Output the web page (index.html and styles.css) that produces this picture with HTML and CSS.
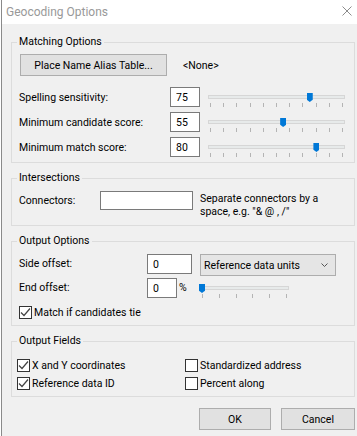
FILE: index.html
```html
<!DOCTYPE html>
<html lang="en">

<head>
    <meta charset="UTF-8">
    <title>Geocoding Options</title>
    <link rel="stylesheet" href="styles.css">
</head>

<body>
    <div class="window">
        <div class="titlebar">
            <span class="title">Geocoding Options</span>
            <svg class="close" width="10" height="10" viewBox="0 0 10 10">
                <path d="M0.5 0.5L9.5 9.5M9.5 0.5L0.5 9.5" stroke="#8c8c8c" stroke-width="1" fill="none"/>
            </svg>
        </div>
        <div class="content">
            <fieldset class="group group-matching">
                <legend>Matching Options</legend>
                <div class="alias-row">
                    <button class="btn btn-alias">Place Name Alias Table...</button>
                    <span class="alias-value">&lt;None&gt;</span>
                </div>
                <div class="score-grid">
                    <label>Spelling sensitivity:</label>
                    <input class="field field-score" type="text" value="75">
                    <div class="slider slider-wide">
                        <div class="slider-track"></div>
                        <div class="slider-ticks">
                            <span class="slider-thumb" style="left: 75%"></span>
                            <i></i><i></i><i></i><i></i><i></i><i></i><i></i><i></i><i></i><i></i><i></i>
                        </div>
                    </div>
                    <label>Minimum candidate score:</label>
                    <input class="field field-score" type="text" value="55">
                    <div class="slider slider-wide">
                        <div class="slider-track"></div>
                        <div class="slider-ticks">
                            <span class="slider-thumb" style="left: 55%"></span>
                            <i></i><i></i><i></i><i></i><i></i><i></i><i></i><i></i><i></i><i></i><i></i>
                        </div>
                    </div>
                    <label>Minimum match score:</label>
                    <input class="field field-score" type="text" value="80">
                    <div class="slider slider-wide">
                        <div class="slider-track"></div>
                        <div class="slider-ticks">
                            <span class="slider-thumb" style="left: 80%"></span>
                            <i></i><i></i><i></i><i></i><i></i><i></i><i></i><i></i><i></i><i></i><i></i>
                        </div>
                    </div>
                </div>
            </fieldset>

            <fieldset class="group group-intersections">
                <legend>Intersections</legend>
                <div class="connector-row">
                    <label class="connector-label">Connectors:</label>
                    <input class="field field-connectors" type="text" value="">
                    <p class="connector-help">Separate connectors by a space, e.g. "&amp; @ , /"</p>
                </div>
            </fieldset>

            <fieldset class="group group-output">
                <legend>Output Options</legend>
                <div class="offset-row">
                    <label class="offset-label">Side offset:</label>
                    <input class="field field-side" type="text" value="0">
                    <div class="combo">
                        <span>Reference data units</span>
                        <svg class="combo-arrow" width="7" height="4" viewBox="0 0 7 4">
                            <path d="M0.5 0.5L3.5 3.5L6.5 0.5" stroke="#555" fill="none"/>
                        </svg>
                    </div>
                </div>
                <div class="offset-row offset-row-end">
                    <label class="offset-label">End offset:</label>
                    <input class="field field-end" type="text" value="0">
                    <span class="pct">%</span>
                    <div class="slider slider-small">
                        <div class="slider-track"></div>
                        <div class="slider-ticks">
                            <span class="slider-thumb" style="left: 0%"></span>
                            <i></i><i></i><i></i><i></i><i></i><i></i>
                        </div>
                    </div>
                </div>
                <div class="check-row check-row-tie">
                    <span class="checkbox">
                        <svg width="11" height="11" viewBox="0 0 11 11"><path d="M1 5.5L4 8.5L10 1.5" stroke="#444" stroke-width="1.2" fill="none"/></svg>
                    </span>
                    <span>Match if candidates tie</span>
                </div>
            </fieldset>

            <fieldset class="group group-fields">
                <legend>Output Fields</legend>
                <div class="fields-grid">
                    <div class="check-row">
                        <span class="checkbox">
                            <svg width="11" height="11" viewBox="0 0 11 11"><path d="M1 5.5L4 8.5L10 1.5" stroke="#444" stroke-width="1.2" fill="none"/></svg>
                        </span>
                        <span>X and Y coordinates</span>
                    </div>
                    <div class="check-row">
                        <span class="checkbox"></span>
                        <span>Standardized address</span>
                    </div>
                    <div class="check-row">
                        <span class="checkbox">
                            <svg width="11" height="11" viewBox="0 0 11 11"><path d="M1 5.5L4 8.5L10 1.5" stroke="#444" stroke-width="1.2" fill="none"/></svg>
                        </span>
                        <span>Reference data ID</span>
                    </div>
                    <div class="check-row">
                        <span class="checkbox"></span>
                        <span>Percent along</span>
                    </div>
                </div>
            </fieldset>

            <div class="dialog-buttons">
                <button class="btn btn-ok">OK</button>
                <button class="btn btn-cancel">Cancel</button>
            </div>
        </div>
    </div>
</body>

</html>
```

FILE: styles.css
```css
html, body {
    margin: 0;
    padding: 0;
    background-color: #ffffff;
}

body {
    font-family: 'Segoe UI', Roboto, 'Noto Sans', sans-serif;
    font-size: 10.5px;
    color: #000;
}

.window {
    width: 356px;
    height: 436px;
    margin-left: 1px;
    border-left: 1px solid #8a8a8a;
    box-sizing: border-box;
    background-color: #f0f0f0;
    overflow: hidden;
}

.titlebar {
    display: flex;
    align-items: center;
    justify-content: space-between;
    height: 24px;
    padding: 0 5px 0 4px;
    background-color: #ffffff;
}
.title {
    color: #999;
    font-size: 12px;
}
.close {
    display: block;
    margin-top: -2px;
}

.content {
    padding: 10px 2px 0 9px;
}

/* group boxes */
.group {
    margin: 0;
    padding: 0 7px 5px 7px;
    border: 1px solid #dcdcdc;
    min-width: 0;
}
.group legend {
    padding: 0 2px;
    margin-left: -2px;
    line-height: 16px;
}
.group + .group {
    margin-top: 7px;
}

.field {
    box-sizing: border-box;
    height: 20px;
    margin: 0;
    padding: 0 5px;
    border: 1px solid #7a7a7a;
    background: #fff;
    font-family: inherit;
    font-size: 10.5px;
    color: #000;
}

.btn {
    box-sizing: border-box;
    height: 22px;
    margin: 0;
    padding: 0;
    border: 1px solid #adadad;
    background-color: #e1e1e1;
    font-family: inherit;
    font-size: 10.5px;
    color: #000;
}

/* matching options */
.alias-row {
    display: flex;
    align-items: center;
    padding-top: 4px;
}
.btn-alias {
    width: 147px;
    margin-left: 1px;
}
.alias-value {
    margin-left: 16px;
}

.score-grid {
    display: grid;
    grid-template-columns: 151px 30px 145px;
    grid-auto-rows: 20px;
    row-gap: 5px;
    align-items: center;
    margin-top: 11px;
}

.slider {
    box-sizing: border-box;
    height: 20px;
    padding: 0 2px;
}
.slider-wide {
    width: 137px;
    margin-left: 8px;
}
.slider-small {
    width: 89px;
}
.slider-track {
    box-sizing: border-box;
    height: 4px;
    margin: 8px -2px 0;
    background-color: #e7eaea;
    border: 1px solid #d6d6d6;
}
.slider-ticks {
    position: relative;
    display: flex;
    justify-content: space-between;
    height: 4px;
    margin-top: 4px;
}
.slider-ticks i {
    width: 1px;
    background-color: #b4b4b4;
}
.slider-thumb {
    position: absolute;
    top: -10px;
    width: 6px;
    height: 9px;
    margin-left: -3px;
    background-color: #0078d7;
    clip-path: polygon(0 0, 100% 0, 100% 75%, 50% 100%, 0 75%);
}

/* intersections */
.connector-row {
    display: flex;
    align-items: flex-start;
    padding-top: 5px;
    padding-bottom: 2px;
}
.connector-label {
    width: 81px;
    line-height: 19px;
}
.field-connectors {
    width: 93px;
    height: 19px;
}
.connector-help {
    width: 132px;
    margin: 1px 0 0 7px;
    line-height: 13px;
}

/* output options */
.offset-row {
    display: flex;
    align-items: flex-start;
    padding-top: 5px;
}
.offset-row-end {
    padding-top: 2px;
}
.offset-label {
    width: 128px;
    line-height: 20px;
}
.field-side {
    width: 45px;
}
.field-end {
    width: 30px;
}
.pct {
    width: 21px;
    padding-left: 2px;
    line-height: 20px;
}
.combo {
    display: flex;
    align-items: center;
    justify-content: space-between;
    box-sizing: border-box;
    width: 136px;
    height: 22px;
    margin-left: 8px;
    padding: 0 7px 0 3px;
    border: 1px solid #adadad;
    background-color: #e5e5e5;
}

.check-row {
    display: flex;
    align-items: center;
    height: 16px;
}
.check-row-tie {
    margin-top: 6px;
}
.checkbox {
    display: flex;
    align-items: center;
    justify-content: center;
    box-sizing: border-box;
    width: 13px;
    height: 13px;
    margin-right: 2px;
    border: 1px solid #333;
    background: #fff;
}
.checkbox svg {
    display: block;
}

/* output fields */
.fields-grid {
    display: grid;
    grid-template-columns: 168px 1fr;
    row-gap: 2px;
    margin-left: -2px;
    padding-top: 8px;
}

.dialog-buttons {
    display: flex;
    justify-content: flex-end;
    gap: 10px;
    margin-top: 11px;
}
.btn-ok {
    width: 72px;
}
.btn-cancel {
    width: 74px;
}
```
